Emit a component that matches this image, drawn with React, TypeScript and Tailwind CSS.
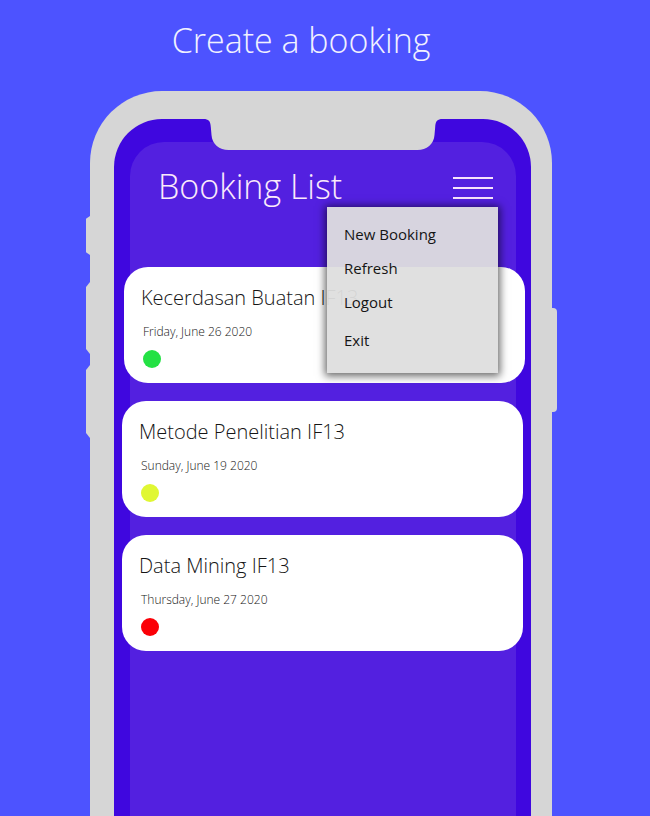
import React from "react";

type Booking = {
  title: string;
  date: string;
  status: string;
  dot: string;
  place: string;
};

const bookings: Booking[] = [
  {
    title: "Kecerdasan Buatan IF13",
    date: "Friday, June 26 2020",
    status: "Approved",
    dot: "bg-[#24e144]",
    place: "ml-0.5 -mr-0.5",
  },
  {
    title: "Metode Penelitian IF13",
    date: "Sunday, June 19 2020",
    status: "Pending",
    dot: "bg-[#e0f733]",
    place: "",
  },
  {
    title: "Data Mining IF13",
    date: "Thursday, June 27 2020",
    status: "Rejected",
    dot: "bg-[#fb0007]",
    place: "",
  },
];

function Notch() {
  return (
    <svg
      aria-hidden="true"
      className="absolute top-0 left-1/2 -translate-x-1/2"
      width="239"
      height="32"
      viewBox="0 0 239 32"
    >
      <path
        d="M0 0C5 0 7 2 7.300 8L8 16C8.500 25 16 31 25 31H214C223 31 230.500 25 231 16L231.700 8C232 2 234 0 239 0Z"
        fill="#d6d6d6"
      />
    </svg>
  );
}

function SideKey({ className }: { className: string }) {
  return (
    <svg
      aria-hidden="true"
      className={`absolute right-full w-1 ${className}`}
      viewBox="0 0 4 72"
      preserveAspectRatio="none"
    >
      <path d="M4 0L0 5V67L4 72Z" fill="#d6d6d6" />
    </svg>
  );
}

function Menu() {
  const items = ["New Booking", "Refresh", "Logout", "Exit"];
  return (
    <nav
      aria-label="Booking menu"
      className="absolute top-full -right-[5px] z-10 flex h-[166px] w-[171px] flex-col bg-[#dedede]/95 pt-[10px] text-[15px] text-[#151515] shadow-[0_1px_8px_2px_rgba(0,0,0,0.6)]"
    >
      {items.map((item) => (
        <button
          key={item}
          type="button"
          className="h-[34px] px-[17px] text-left last:mt-1"
        >
          {item}
        </button>
      ))}
    </nav>
  );
}

function BookingCard({ booking }: { booking: Booking }) {
  return (
    <li
      className={`flex h-[116px] flex-col items-start rounded-[24px] bg-white px-[17px] pt-[17px] text-[#151515] ${booking.place}`}
    >
      <h3 className="text-[20px] leading-7 font-light">{booking.title}</h3>
      <p className="mt-3 pl-0.5 text-[12px] leading-4 font-light">
        {booking.date}
      </p>
      <span
        role="img"
        aria-label={booking.status}
        className={`mt-[10px] ml-0.5 h-[18px] w-[18px] rounded-full ${booking.dot}`}
      />
    </li>
  );
}

export default function App() {
  return (
    <main className="flex h-screen flex-col items-center overflow-hidden bg-[#4d53ff] pr-2 font-['Open_Sans','Noto_Sans',sans-serif]">
      <h1 className="pt-4 pr-10 text-[34px] leading-[48px] font-light text-[#f1f1ff]">
        Create a booking
      </h1>

      <div className="relative mt-[27px] flex w-full max-w-[462px] flex-1 flex-col rounded-t-[72px] bg-[#d6d6d6] pt-7 pr-[21px] pl-6">
        <SideKey className="top-[125px] h-[39px]" />
        <SideKey className="top-[191px] h-[72px]" />
        <SideKey className="top-[274px] h-[73px]" />
        <span className="absolute top-[217px] left-full h-[104px] w-[5px] rounded-r bg-[#d6d6d6]" />

        <div className="relative flex flex-1 flex-col rounded-t-[48px] bg-[#3f07df] pt-[23px] pr-[15px] pl-4">
          <section className="flex-1 rounded-t-[34px] bg-[#5320e0]">
            <header className="relative mr-[23px] ml-7 flex h-[65px] items-center justify-between pt-[23px]">
              <h2 className="text-[34px] leading-[42px] font-light text-[#fbeafb]">
                Booking List
              </h2>
              <button
                type="button"
                aria-label="Menu"
                className="flex w-10 flex-col gap-2 pt-1"
              >
                <span className="h-0.5 bg-[#f6e2fb]" />
                <span className="h-0.5 bg-[#f6e2fb]" />
                <span className="h-0.5 bg-[#f6e2fb]" />
              </button>
              <Menu />
            </header>
            <ul className="-mr-[7px] -ml-2 mt-[60px] flex flex-col gap-[18px]">
              {bookings.map((booking) => (
                <BookingCard key={booking.title} booking={booking} />
              ))}
            </ul>
          </section>
          <Notch />
        </div>
      </div>
    </main>
  );
}
